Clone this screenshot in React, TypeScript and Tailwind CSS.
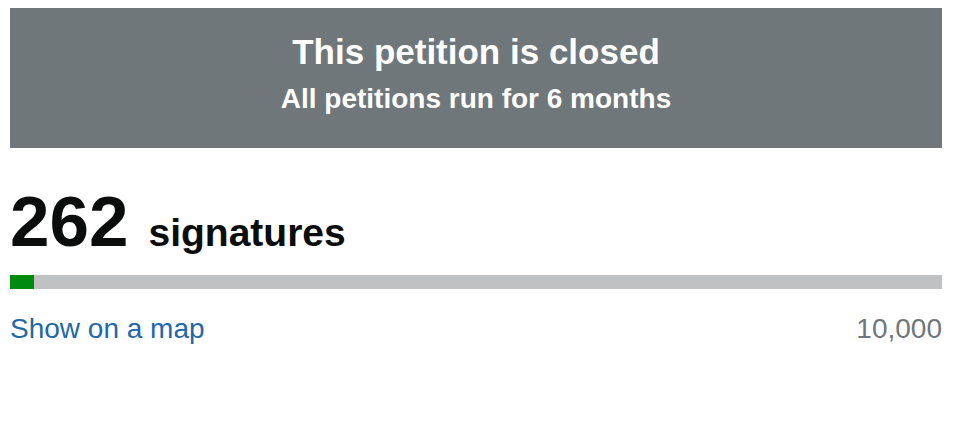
export default function App() {
  const count = 262
  const target = 10000
  const pct = Math.min(100, (count / target) * 100)

  return (
    <div className="min-h-screen bg-white font-['Liberation_Sans',Arial,sans-serif] text-[#0b0c0c]">
      <div className="ml-[10px] w-[932px] pt-2">
        {/* Closed banner */}
        <div className="flex h-[140px] flex-col items-center bg-[#6f777b] pt-[23px] text-white">
          <h1 className="text-[35px] font-bold leading-[42px]">This petition is closed</h1>
          <p className="mt-[10px] text-[28px] font-bold leading-[32px]">All petitions run for 6 months</p>
        </div>

        {/* Signature count */}
        <div className="mt-[38px] flex items-baseline gap-[20px]">
          <span className="text-[71px] font-bold leading-[72px]">262</span>
          <span className="text-[39px] font-bold leading-[40px]">signatures</span>
        </div>

        <div className="mt-[17px] h-[14px] w-full bg-[#bfc1c3]">
          <div className="h-full bg-[#008a10]" style={{ width: `${pct}%` }} />
        </div>

        <div className="mt-[24px] flex items-baseline justify-between">
          <a href="#" className="text-[28px] leading-[32px] text-[#2267a8]">Show on a map</a>
          <span className="text-[28px] leading-[32px] text-[#6f777b]">10,000</span>
        </div>
      </div>
    </div>
  )
}
